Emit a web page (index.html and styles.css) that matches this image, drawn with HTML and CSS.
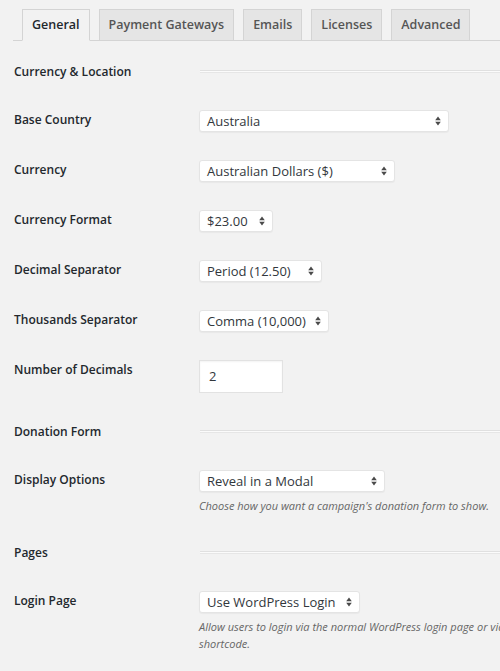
FILE: index.html
```html
<!DOCTYPE html>
<html>
<head>
<meta charset="utf-8">
<link rel="stylesheet" href="styles.css">
</head>
<body>
<div class="page">
  <nav class="tabs">
    <span class="tab active">General</span>
    <span class="tab">Payment Gateways</span>
    <span class="tab">Emails</span>
    <span class="tab">Licenses</span>
    <span class="tab">Advanced</span>
  </nav>

  <div class="heading first"><span class="label">Currency &amp; Location</span><span class="rule"></span></div>

  <div class="row">
    <span class="label">Base Country</span>
    <div class="field"><div class="select w-250"><span>Australia</span><svg class="arr" width="6" height="10" viewBox="0 0 6 10"><path d="M3 0.5L5.8 4.2H0.2z M0.2 5.8H5.8L3 9.5z" fill="#4a4a4a"/></svg></div></div>
  </div>

  <div class="row">
    <span class="label">Currency</span>
    <div class="field"><div class="select w-196"><span>Australian Dollars ($)</span><svg class="arr" width="6" height="10" viewBox="0 0 6 10"><path d="M3 0.5L5.8 4.2H0.2z M0.2 5.8H5.8L3 9.5z" fill="#4a4a4a"/></svg></div></div>
  </div>

  <div class="row">
    <span class="label">Currency Format</span>
    <div class="field"><div class="select w-74"><span>$23.00</span><svg class="arr" width="6" height="10" viewBox="0 0 6 10"><path d="M3 0.5L5.8 4.2H0.2z M0.2 5.8H5.8L3 9.5z" fill="#4a4a4a"/></svg></div></div>
  </div>

  <div class="row">
    <span class="label">Decimal Separator</span>
    <div class="field"><div class="select w-123"><span>Period (12.50)</span><svg class="arr" width="6" height="10" viewBox="0 0 6 10"><path d="M3 0.5L5.8 4.2H0.2z M0.2 5.8H5.8L3 9.5z" fill="#4a4a4a"/></svg></div></div>
  </div>

  <div class="row">
    <span class="label">Thousands Separator</span>
    <div class="field"><div class="select w-130"><span>Comma (10,000)</span><svg class="arr" width="6" height="10" viewBox="0 0 6 10"><path d="M3 0.5L5.8 4.2H0.2z M0.2 5.8H5.8L3 9.5z" fill="#4a4a4a"/></svg></div></div>
  </div>

  <div class="row">
    <span class="label">Number of Decimals</span>
    <div class="field"><div class="input">2</div></div>
  </div>

  <div class="heading"><span class="label">Donation Form</span><span class="rule"></span></div>

  <div class="row">
    <span class="label">Display Options</span>
    <div class="field">
      <div class="select w-186"><span>Reveal in a Modal</span><svg class="arr" width="6" height="10" viewBox="0 0 6 10"><path d="M3 0.5L5.8 4.2H0.2z M0.2 5.8H5.8L3 9.5z" fill="#4a4a4a"/></svg></div>
      <p class="desc">Choose how you want a campaign's donation form to show.</p>
    </div>
  </div>

  <div class="heading"><span class="label">Pages</span><span class="rule"></span></div>

  <div class="row">
    <span class="label">Login Page</span>
    <div class="field">
      <div class="select w-161"><span>Use WordPress Login</span><svg class="arr" width="6" height="10" viewBox="0 0 6 10"><path d="M3 0.5L5.8 4.2H0.2z M0.2 5.8H5.8L3 9.5z" fill="#4a4a4a"/></svg></div>
      <p class="desc nowrap">Allow users to login via the normal WordPress login page or via<br>shortcode.</p>
    </div>
  </div>
</div>
</body>
</html>
```

FILE: styles.css
```css
html, body {
  margin: 0;
  padding: 0;
  background: #f2f2f2;
  overflow: hidden;
}
body {
  font-family: "Open Sans", "Noto Sans", sans-serif;
  color: #23282d;
}
.page {
  width: 500px;
  overflow: hidden;
}
.tabs {
  display: flex;
  gap: 9px;
  margin: 9px 0 0 13px;
  padding-left: 9px;
  border-bottom: 1px solid #d4d4d4;
  height: 31px;
  align-items: flex-end;
}
.tab {
  display: block;
  box-sizing: border-box;
  height: 32px;
  margin-bottom: -1px;
  padding: 0 9px;
  line-height: 30px;
  font-size: 12.5px;
  font-weight: 600;
  color: #555;
  background: #e5e5e5;
  border: 1px solid #d4d4d4;
}
.tab.active {
  background: #f2f2f2;
  color: #23282d;
  border-bottom-color: #f2f2f2;
}
.label {
  font-size: 12px;
  font-weight: 600;
  line-height: 20px;
  color: #23282d;
}
.heading {
  display: grid;
  grid-template-columns: 186px 1fr;
  align-items: center;
  height: 49px;
  padding-left: 14px;
  box-sizing: border-box;
}
.heading.first {
  margin-top: 6px;
}
.rule {
  display: block;
  height: 1px;
  border-top: 1px solid #e0e0e0;
  border-bottom: 1px solid #e6e6e6;
  background: #fbfbfb;
}
.row {
  display: grid;
  grid-template-columns: 185px 1fr;
  align-items: start;
  padding: 14px 0 14px 14px;
}
.field {
  min-width: 0;
}
.select {
  box-sizing: border-box;
  height: 22px;
  background: #fff;
  border: 1px solid #e4e4e4;
  border-radius: 3px;
  box-shadow: 0 1px 1px rgba(0,0,0,0.04);
  display: flex;
  align-items: center;
  justify-content: space-between;
  padding: 0 7px;
  font-size: 13px;
  color: #32373c;
  white-space: nowrap;
}
.select .arr {
  flex: none;
}
.w-250 { width: 250px; }
.w-196 { width: 196px; }
.w-74 { width: 74px; }
.w-123 { width: 123px; }
.w-130 { width: 130px; }
.w-186 { width: 186px; }
.w-161 { width: 161px; }
.input {
  box-sizing: border-box;
  width: 84px;
  height: 33px;
  background: #fff;
  border: 1px solid #e2e2e2;
  box-shadow: inset 0 1px 2px rgba(0,0,0,0.05);
  padding: 0 9px;
  line-height: 31px;
  font-size: 13px;
  color: #32373c;
}
.desc {
  margin: 5px 0 0 0;
  font-size: 11px;
  line-height: 17px;
  font-style: italic;
  color: #666;
}
.nowrap {
  white-space: nowrap;
}
```
